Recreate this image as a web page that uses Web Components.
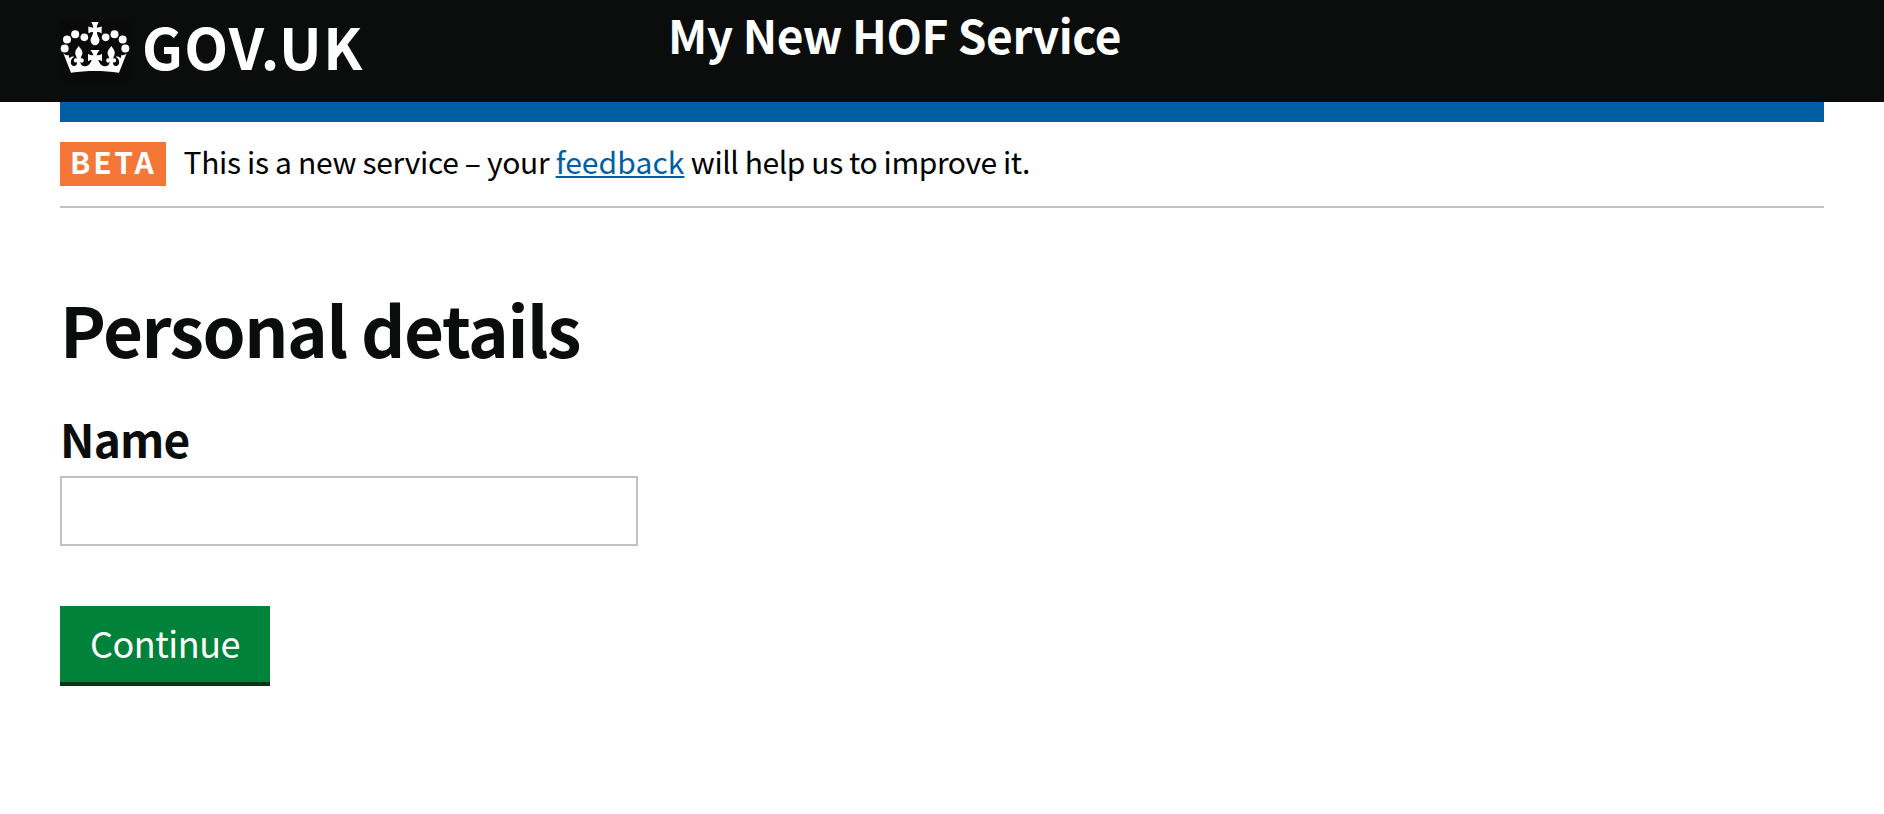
<!DOCTYPE html>
<html lang="en">
<head>
<meta charset="utf-8">
<title>Personal details - My New HOF Service</title>
<style>
body { margin: 0; background: #fff; color: #0b0c0c; font-family: "Noto Sans CJK SC", "Noto Sans", sans-serif; }
main { padding: 0 60px; }
</style>
</head>
<body>
<gov-header>My New HOF Service</gov-header>
<main>
  <phase-banner></phase-banner>
  <page-heading>Personal details</page-heading>
  <text-field>Name</text-field>
  <gov-button>Continue</gov-button>
</main>
<script>
const define = (name, html) => customElements.define(name, class extends HTMLElement {
  constructor() {
    super();
    this.attachShadow({ mode: 'open' }).innerHTML = html;
  }
});

define('crown-logo', `
<style>
:host { display: block; width: 70px; height: 62px; background: #0a0a0a; }
svg { display: block; }
</style>
<svg width="70" height="62" viewBox="12 12 210 186" fill="#fff" aria-hidden="true">
  <circle cx="26" cy="97.500" r="12"/><circle cx="33" cy="70.500" r="12"/>
  <circle cx="57.500" cy="55" r="12"/><circle cx="85" cy="64" r="11.500"/>
  <circle cx="208" cy="97.500" r="12"/><circle cx="200" cy="70.500" r="12"/>
  <circle cx="175.500" cy="55" r="12"/><circle cx="149" cy="64" r="11.500"/>
  <path d="M106 18h22c-2 5-5 9-6 17 5 0 10-1 15-4v21c-5-3-9-4-14-4 0 7 2 10 4 15 3 4 4 8 3 13-1 7-6 12-13 12s-12-5-13-12c-1-5 0-9 3-13 2-5 4-8 4-15-5 0-9 1-14 4V31c5 3 10 4 15 4-1-8-4-12-6-17z"/>
  <path d="M45 170 22 112C27 117 32 119 38 117 38 121 39 124 41 127 45 122 50 120 55 123 50 125 46 129 45 135 43 143 47 150 54 150 61 150 64 144 63 137 60 141 55 140 54 136 52 130 57 125 63 128 61 120 56 114 58 107 60 100 64 96 68 90 72 96 77 100 79 107 81 114 75 120 74 128 79 125 85 129 83 136 81 141 76 141 73 137 73 145 78 151 86 151 95 151 103 145 107 132 103 132 100 133 96 136L96 113C100 116 106 118 112 118 111 111 107 107 103 102L131 102C127 107 123 111 122 118 128 118 134 116 138 113L138 136C134 133 131 132 127 132 131 145 139 151 148 151 156 151 161 145 161 137 158 141 153 141 151 136 149 129 155 125 160 128 159 120 153 114 155 107 157 100 162 96 166 90 170 96 174 100 176 107 178 114 173 120 171 128 177 125 182 130 180 136 179 140 174 141 171 137 170 144 173 150 180 150 187 150 191 143 189 135 188 129 184 125 179 123 184 120 189 122 193 127 195 124 196 121 196 117 202 119 207 117 212 112L189 170C141 163 93 163 45 170Z"/>
</svg>`);

define('gov-header', `
<style>
:host { display: block; }
header { display: flex; align-items: flex-start; height: 102px; padding: 0 60px; background: #0b0c0c; color: #fff; font-weight: 700; }
crown-logo { margin-top: 20px; }
.brand { width: 608px; display: flex; align-items: flex-start; }
.name { margin-left: 12px; font-size: 57px; line-height: 90px; letter-spacing: 1.4px; }
.service { font-size: 46px; line-height: 68px; letter-spacing: -.45px; white-space: nowrap; }
.bar { height: 20px; margin: 0 60px; background: #005ea5; }
</style>
<header>
  <div class="brand"><crown-logo></crown-logo><span class="name">GOV.UK</span></div>
  <div class="service"><slot></slot></div>
</header>
<div class="bar"></div>`);

define('phase-banner', `
<style>
:host { display: flex; align-items: flex-start; padding: 20px 0; border-bottom: 2px solid #bfc1c3; font-size: 30px; line-height: 38px; }
.tag { box-sizing: border-box; width: 106px; height: 44px; padding-left: 10px; background: #f47738; color: #fff; font-weight: 700; letter-spacing: 2.7px; }
p { margin: 0 0 0 17.500px; color: #000; letter-spacing: -.33px; white-space: nowrap; }
a { color: #005ea5; letter-spacing: .1px; text-decoration: underline 2px; text-underline-offset: 2px; text-decoration-skip-ink: none; }
.end { letter-spacing: -.42px; }
</style>
<strong class="tag">BETA</strong>
<p>This is a new service – your <a href="#">feedback</a><span class="end"> will help us to improve it.</span></p>`);

define('page-heading', `
<style>
:host { display: block; margin-top: 80px; }
h1 { margin: 0; font-size: 69px; line-height: 80px; font-weight: 700; letter-spacing: -1.4px; }
</style>
<h1><slot></slot></h1>`);

define('text-field', `
<style>
:host { display: block; margin-top: 45px; }
label { display: block; font-size: 46px; line-height: 50px; font-weight: 700; letter-spacing: -.8px; }
input { display: block; box-sizing: border-box; width: 578px; height: 70px; margin: 13px 0 0; padding: 8px; border: 2px solid #bfc1c3; border-radius: 0; background: #fff; font: 38px "Noto Sans CJK SC", sans-serif; outline: 0; }
</style>
<label for="name"><slot></slot></label>
<input id="name" type="text">`);

define('gov-button', `
<style>
:host { display: block; margin-top: 60px; }
button { display: block; width: 210px; height: 80px; margin: 0; padding: 0 0 8px; border: 0; box-shadow: inset 0 -4px #003618; background: #00823b; color: #fff; font: 36px/72px "Noto Sans CJK SC", sans-serif; letter-spacing: -.5px; }
</style>
<button type="button"><slot></slot></button>`);
</script>
</body>
</html>
